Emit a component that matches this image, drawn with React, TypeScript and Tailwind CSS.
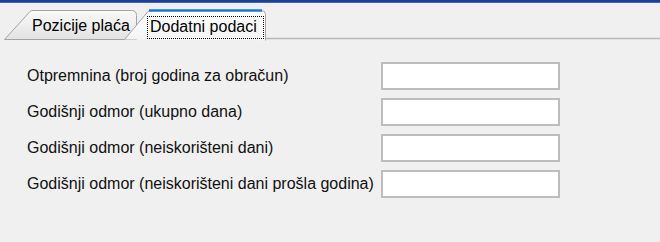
import React from 'react'

const fields = [
  'Otpremnina (broj godina za obračun)',
  'Godišnji odmor (ukupno dana)',
  'Godišnji odmor (neiskorišteni dani)',
  'Godišnji odmor (neiskorišteni dani prošla godina)',
]

function TabStrip() {
  return (
    <div className="relative h-[38px] w-full">
      {/* tab shapes */}
      <svg className="absolute inset-0" width="660" height="38" viewBox="0 0 660 38">
        <defs>
          <linearGradient id="t1" x1="0" y1="0" x2="0" y2="1">
            <stop offset="0" stopColor="#fafafa" />
            <stop offset="1" stopColor="#e2e2e2" />
          </linearGradient>
          <linearGradient id="t2" x1="0" y1="0" x2="0" y2="1">
            <stop offset="0" stopColor="#ffffff" />
            <stop offset="1" stopColor="#f4f4f4" />
          </linearGradient>
        </defs>
        <path
          d="M4.5,36.5 L30,8.5 Q31,7.5 33,7.5 L131.5,7.5 Q136.5,7.5 136.5,12.5 L136.5,36.5 Z"
          fill="url(#t1)"
          stroke="#a3a3a3"
        />
        <path
          d="M124.5,36.5 L148,8.5 Q149,7.5 151,7.5 L261.5,7.5 Q265.5,7.5 265.5,11.5 L265.5,37.5"
          fill="url(#t2)"
          stroke="#a3a3a3"
        />
        <path d="M149,7.5 L262,7.5" stroke="#1a78d8" strokeWidth="2.5" />
        <path d="M265.5,35.5 L660,35.5" stroke="#b6b6b6" strokeWidth="1.5" />
      </svg>
      <div className="absolute left-[32px] top-[13px] text-[16px] leading-[20px] text-black">Pozicije plaća</div>
      <div className="absolute left-[147px] top-[13px] h-[23px] w-[117px] border border-dotted border-black pl-[2px] text-[16px] leading-[20px] text-black">
        Dodatni podaci
      </div>
    </div>
  )
}

export default function App() {
  return (
    <div className="h-[242px] w-[660px] overflow-hidden bg-[#f0f0f0] font-['Liberation_Sans',Arial,sans-serif]">
      <div className="h-[3px] w-full border-t-2 border-[#1b3f9a] bg-[#3f63b8]" />
      <TabStrip />
      <div className="grid grid-cols-[354px_179px] gap-y-2 pl-[27px] pt-[21px]">
        {fields.map((f) => (
          <React.Fragment key={f}>
            <div className="flex h-[28px] items-center text-[16px] text-[#111]">{f}</div>
            <input className="h-[28px] w-[179px] border-2 border-[#bdbdbd] bg-white outline-none" />
          </React.Fragment>
        ))}
      </div>
    </div>
  )
}
